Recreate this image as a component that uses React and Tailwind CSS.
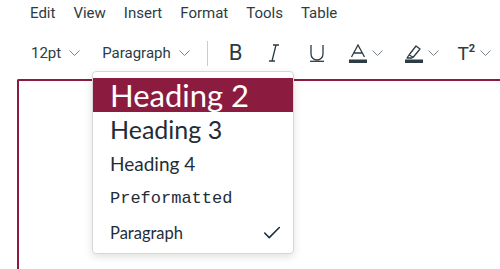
import { Check } from "lucide-react";

const Chevron = ({ className = "" }) => (
    <svg width="11" height="6" viewBox="0 0 11 6" className={className} fill="none" stroke="#7a858d" strokeWidth="1">
        <path d="M0.5 0.5l5 5 5-5" />
    </svg>
);

const App = () => {
    const menus = ["Edit", "View", "Insert", "Format", "Tools", "Table"];

    return (
        <div className="relative w-[500px] h-[269px] overflow-hidden bg-white text-[#2d3b45] font-['Roboto',sans-serif]">
            {/* Menu bar */}
            <div className="flex items-center gap-[18px] pl-[30px] h-[27px] text-[15px]">
                {menus.map((m) => (
                    <span key={m}>{m}</span>
                ))}
            </div>

            {/* Toolbar */}
            <div className="flex items-center h-[52px] pl-[31px]">
                <span className="text-[15px]">12pt</span>
                <Chevron className="ml-[8px]" />
                <span className="text-[15px] ml-[22px]">Paragraph</span>
                <Chevron className="ml-[8px]" />
                <div className="w-px h-[25px] bg-[#c7cdd1] ml-[17px]" />
                <span className="ml-[21px] text-[22px] font-normal leading-none">B</span>
                <svg width="10" height="18" viewBox="0 0 10 18" className="ml-[27px]" fill="none" stroke="#2d3b45" strokeWidth="1.3">
                    <path d="M4 1h6M0 17h6M7 1L3 17" />
                </svg>
                <svg width="14" height="18" viewBox="0 0 14 18" className="ml-[31px]" fill="none" stroke="#2d3b45" strokeWidth="1.3">
                    <path d="M1 1v9a6 6 0 0012 0V1" />
                    <path d="M0 17.3h14" />
                </svg>
                <svg width="18" height="19" viewBox="0 0 18 19" className="ml-[25px]" fill="none">
                    <path d="M2.5 13L9 1l6.5 12M5 9h8" stroke="#2d3b45" strokeWidth="1.3" />
                    <rect x="0" y="15.5" width="18" height="3.5" fill="#2d3b45" />
                </svg>
                <Chevron className="ml-[5px]" />
                <svg width="18" height="19" viewBox="0 0 18 19" className="ml-[22px]" fill="none">
                    <path d="M4 11l-2 3h5l1-1.5M4 11l7-9 4 3-7 8.5M4 11l4 2" stroke="#2d3b45" strokeWidth="1.3" strokeLinejoin="round" />
                    <rect x="0" y="15.5" width="18" height="3.5" fill="#2d3b45" />
                </svg>
                <Chevron className="ml-[5px]" />
                <span className="ml-[18px] text-[19px] leading-none">T</span>
                <span className="text-[11px] font-bold leading-none mb-[9px]">2</span>
                <Chevron className="ml-[5px]" />
            </div>

            {/* Editor area */}
            <div className="ml-[17px] h-[200px] border-l-2 border-t-2 border-[#8b1c3f] rounded-tl-[2px]" />

            {/* Block format dropdown */}
            <div className="absolute left-[92px] top-[71px] w-[202px] h-[183px] bg-white border border-[#d4d8db] rounded-[4px] shadow-[0_3px_8px_rgba(0,0,0,0.12)] pt-[6px] text-[#1f2d38] font-['Lato',sans-serif]">
                <div className="h-[34px] bg-[#8b1c3f] text-white text-[31px] leading-[34px] pl-[17px]">Heading 2</div>
                <div className="h-[35px] text-[25px] leading-[35px] pl-[17px]">Heading 3</div>
                <div className="h-[34px] text-[19px] leading-[34px] pl-[17px]">Heading 4</div>
                <div className="h-[35px] text-[17px] leading-[35px] pl-[17px] font-['Liberation_Mono',monospace]">Preformatted</div>
                <div className="h-[34px] text-[16.5px] leading-[34px] pl-[17px] pr-[10px] flex items-center justify-between">
                    <span>Paragraph</span>
                    <Check size={22} strokeWidth={1.7} className="text-[#1f2d38]" />
                </div>
            </div>
        </div>
    );
};

export default App;
